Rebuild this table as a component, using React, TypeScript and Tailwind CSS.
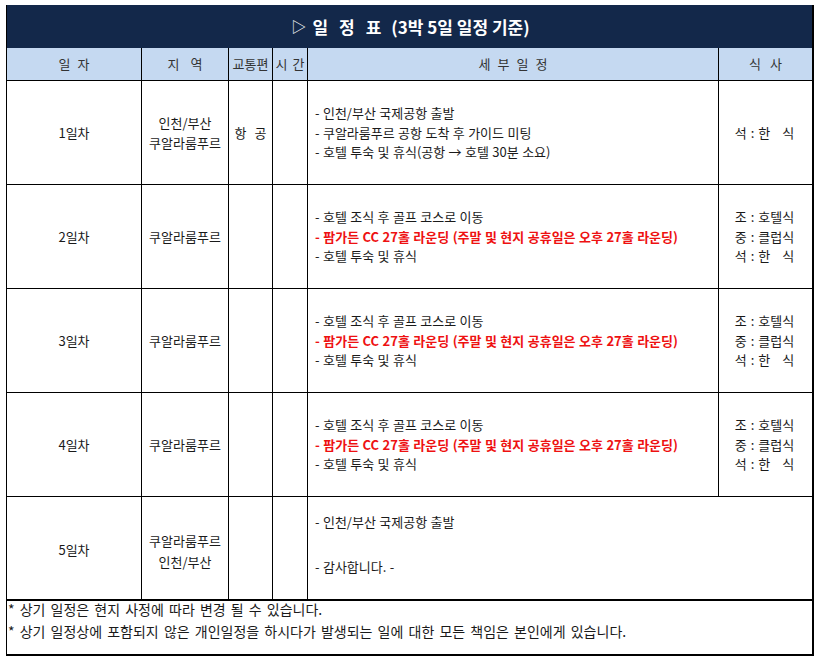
import React from "react";

const font = { fontFamily: '"Noto Sans CJK KR", "Noto Sans", sans-serif' };

function Spaced({ chars, gap }: { chars: string[]; gap: string }) {
  return (
    <span className={`inline-flex ${gap}`}>
      {chars.map((c, i) => (
        <span key={i}>{c}</span>
      ))}
    </span>
  );
}

function Cell({ children, className = "" }: { children?: React.ReactNode; className?: string }) {
  return <div className={`bg-white flex flex-col items-center justify-center text-center ${className}`}>{children}</div>;
}

function HeadCell({ children }: { children: React.ReactNode }) {
  return <div className="bg-[#c5d9f1] flex items-center justify-center text-[#333333]">{children}</div>;
}

function Meals({ full }: { full: boolean }) {
  const row = (a: string, b: React.ReactNode) => (
    <div className="flex items-center h-[19.5px]">
      <span>{a}</span>
      <span className="mx-[4px]">:</span>
      <span className="inline-flex w-[36px] justify-between">{b}</span>
    </div>
  );
  const han = (
    <>
      <span>한</span>
      <span>식</span>
    </>
  );
  return (
    <Cell className="pr-[2px]">
      {full && row("조", <span>호텔식</span>)}
      {full && row("중", <span>클럽식</span>)}
      {row("석", han)}
    </Cell>
  );
}

function Golf() {
  return (
    <div className="bg-white flex flex-col justify-center pl-[7px] leading-[19.5px] [word-spacing:0.5px]">
      <div>- 호텔 조식 후 골프 코스로 이동</div>
      <div className="text-[#ee1111] font-bold">- 팜가든 CC 27홀 라운딩 (주말 및 현지 공휴일은 오후 27홀 라운딩)</div>
      <div>- 호텔 투숙 및 휴식</div>
    </div>
  );
}

export default function App() {
  return (
    <div className="bg-white w-[819px] h-[661px] pt-[5px] pl-[6px]" style={font}>
      <div className="w-[808px] border-l border-black border-r-2 border-r-black">
        <div className="h-[43px] bg-[#13284a] flex items-center justify-center text-white text-[17px] pl-[2px]">
          <span className="font-normal mr-[6px] text-[15px]">▷</span>
          <span className="font-bold">
            <span className="inline-flex gap-[11px] mr-[10px]">
              <span>일</span>
              <span>정</span>
              <span>표</span>
            </span>
            (3박 5일 일정 기준)
          </span>
        </div>
        <div className="grid grid-cols-[134px_86px_43px_34px_410px_93px] grid-rows-[32px_103px_103px_103px_103px_102px] gap-px bg-black text-[13px] text-[#1a1a1a]">
          <HeadCell><Spaced chars={["일", "자"]} gap="gap-[7px]" /></HeadCell>
          <HeadCell><Spaced chars={["지", "역"]} gap="gap-[11px]" /></HeadCell>
          <HeadCell>교통편</HeadCell>
          <HeadCell><Spaced chars={["시", "간"]} gap="gap-[5px]" /></HeadCell>
          <HeadCell><Spaced chars={["세", "부", "일", "정"]} gap="gap-[7px]" /></HeadCell>
          <HeadCell><Spaced chars={["식", "사"]} gap="gap-[9px]" /></HeadCell>

          <Cell>1일차</Cell>
          <Cell className="leading-[20px]">
            <div>인천/부산</div>
            <div>쿠알라룸푸르</div>
          </Cell>
          <Cell><Spaced chars={["항", "공"]} gap="gap-[8px]" /></Cell>
          <Cell />
          <div className="bg-white flex flex-col justify-center pl-[7px] leading-[19.5px] [word-spacing:0.5px]">
            <div>- 인천/부산 국제공항 출발</div>
            <div>- 쿠알라룸푸르 공항 도착 후 가이드 미팅</div>
            <div>- 호텔 투숙 및 휴식(공항 → 호텔 30분 소요)</div>
          </div>
          <Meals full={false} />

          <Cell>2일차</Cell>
          <Cell>쿠알라룸푸르</Cell>
          <Cell />
          <Cell />
          <Golf />
          <Meals full />

          <Cell>3일차</Cell>
          <Cell>쿠알라룸푸르</Cell>
          <Cell />
          <Cell />
          <Golf />
          <Meals full />

          <Cell>4일차</Cell>
          <Cell>쿠알라룸푸르</Cell>
          <Cell />
          <Cell />
          <Golf />
          <Meals full />

          <Cell className="pt-[4px]">5일차</Cell>
          <Cell className="leading-[21px] pt-[6px]">
            <div>쿠알라룸푸르</div>
            <div>인천/부산</div>
          </Cell>
          <Cell />
          <Cell />
          <div className="col-span-2 bg-white flex flex-col pl-[7px] pt-[15px] leading-[19.5px] gap-[25.5px] [word-spacing:0.5px]">
            <div>- 인천/부산 국제공항 출발</div>
            <div>- 감사합니다. -</div>
          </div>
        </div>
        <div className="border-t-2 border-b-2 border-black h-[57px] pl-[1px] text-[14px] text-[#1a1a1a] flex flex-col gap-[6px] leading-[16px] [word-spacing:2px]">
          <div>* 상기 일정은 현지 사정에 따라 변경 될 수 있습니다.</div>
          <div>* 상기 일정상에 포함되지 않은 개인일정을 하시다가 발생되는 일에 대한 모든 책임은 본인에게 있습니다.</div>
        </div>
      </div>
    </div>
  );
}
